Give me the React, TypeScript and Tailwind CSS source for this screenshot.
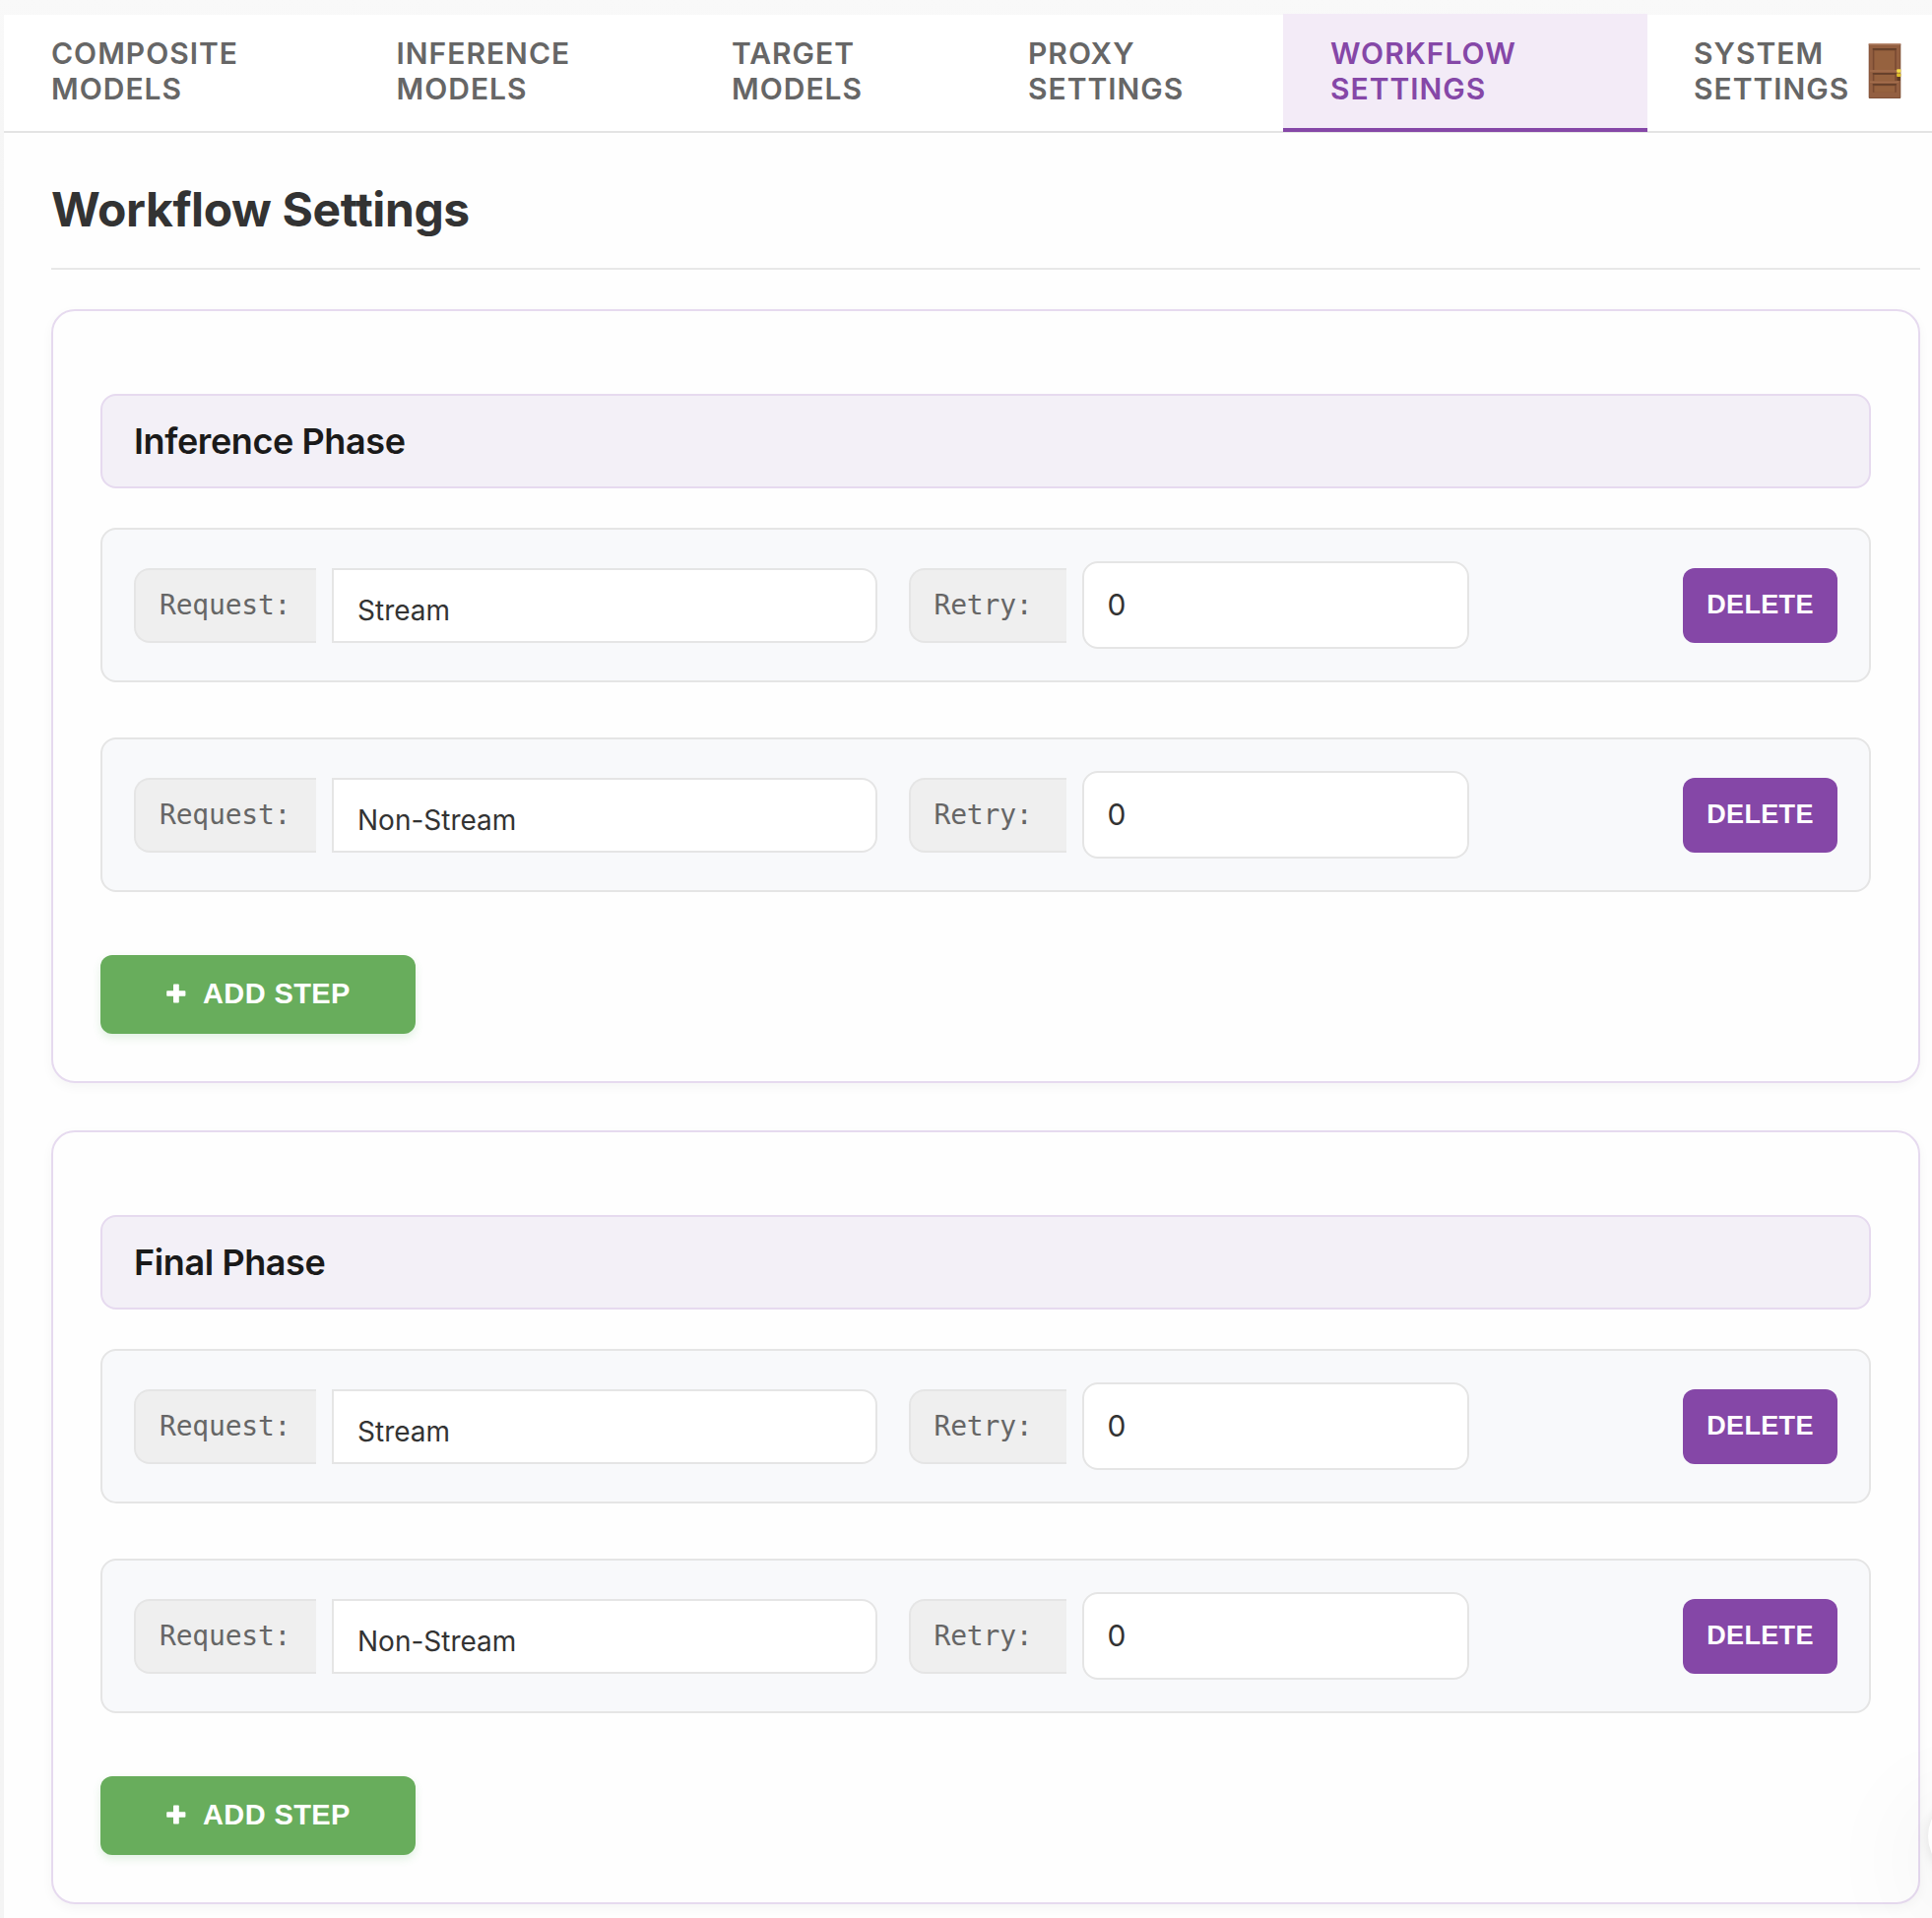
const tabs = [
  { lines: ['COMPOSITE', 'MODELS'], width: 'w-[350.5px]' },
  { lines: ['INFERENCE', 'MODELS'], width: 'w-[340.5px]' },
  { lines: ['TARGET', 'MODELS'], width: 'w-[301px]' },
  { lines: ['PROXY', 'SETTINGS'], width: 'w-[307px]' },
  { lines: ['WORKFLOW', 'SETTINGS'], width: 'w-[370px]', active: true },
  { lines: ['SYSTEM', 'SETTINGS'], width: 'w-[225px] -ml-px' },
];

const phases = [
  { title: 'Inference Phase', steps: ['Stream', 'Non-Stream'] },
  { title: 'Final Phase', steps: ['Stream', 'Non-Stream'] },
];

function DoorIcon() {
  return (
    <svg width="34" height="58" viewBox="0 0 34 58" aria-label="Exit">
      <rect x="0.7" y="1.2" width="32.6" height="55.8" rx="1" fill="#7d5038" />
      <rect x="1.4" y="2" width="31" height="54" fill="#935f41" />
      <rect x="0.7" y="1" width="32.6" height="1.4" fill="#bb8e75" />
      <rect x="4.8" y="6" width="24" height="22" fill="#7a4b32" />
      <rect x="6.4" y="8.4" width="20.8" height="19.6" fill="#96623f" />
      <rect x="4.8" y="6" width="24" height="1.8" fill="#64402b" />
      <rect x="2" y="28.4" width="29" height="1.2" fill="#a87352" />
      <rect x="4.8" y="31" width="24" height="8.4" fill="#7a4b32" />
      <rect x="6.4" y="33" width="20.8" height="6.4" fill="#96623f" />
      <rect x="4.8" y="31" width="24" height="1.6" fill="#64402b" />
      <rect x="2" y="39.6" width="29" height="1.2" fill="#a87352" />
      <rect x="4.8" y="42" width="24" height="8.8" fill="#7a4b32" />
      <rect x="6.4" y="44.2" width="20.8" height="6.6" fill="#96623f" />
      <rect x="4.8" y="42" width="24" height="1.6" fill="#64402b" />
      <rect x="29.4" y="34" width="3.4" height="5" fill="#5f3a24" />
      <rect x="29.2" y="27.2" width="4.2" height="3.6" rx="0.8" fill="#f6e04a" />
      <rect x="29.2" y="31.4" width="4.2" height="3.6" rx="0.8" fill="#dfc02c" />
    </svg>
  );
}

function PlusIcon() {
  return (
    <svg width="20" height="20" viewBox="0 0 20 20" fill="#ffffff" className="-translate-y-px">
      <rect x="0.2" y="7.2" width="19.2" height="5.6" rx="0.8" />
      <rect x="7" y="0.6" width="5.8" height="19" rx="0.8" />
    </svg>
  );
}

function StepRow({ value }: { value: string }) {
  return (
    <div className="flex h-[157px] items-center rounded-2xl border-2 border-[#e5e5e5] bg-[#f8f9fb] px-8">
      <div className="flex h-[76px] w-[185px] items-center rounded-l-2xl border-2 border-r-0 border-[#e5e5e5] bg-[#efefef] pl-6 font-['DejaVu_Sans_Mono',monospace] text-[28px] leading-[36px] tracking-[-0.2px] text-[#666]">
        <span>Request:</span>
      </div>
      <div className="ml-4 flex h-[76px] w-[554px] items-center rounded-r-2xl border-2 border-[#e5e5e5] bg-white px-6 pt-[11px] text-[28px] leading-[36px] text-[#333]">
        {value}
      </div>
      <div className="ml-8 flex h-[76px] w-[160px] items-center rounded-l-2xl border-2 border-r-0 border-[#e5e5e5] bg-[#efefef] pl-[23.5px] font-['DejaVu_Sans_Mono',monospace] text-[28px] leading-[36px] tracking-[-0.2px] text-[#666]">
        <span>Retry:</span>
      </div>
      <div className="ml-4 flex h-[89px] w-[393px] items-center rounded-2xl border-2 border-[#e5e5e5] bg-white px-[23.5px] pb-0.5 text-[30px] leading-[36px] text-[#333]">
        0
      </div>
      <button className="ml-auto flex h-[76px] w-[157px] items-center justify-center rounded-xl bg-[#8547a7] pb-0.5 font-['Liberation_Sans',Arial,sans-serif] text-[27px] font-bold leading-[30px] tracking-[0.35px] text-white">
        DELETE
      </button>
    </div>
  );
}

function PhaseCard({ title, steps }: { title: string; steps: string[] }) {
  return (
    <section className="flex h-[786px] flex-col items-stretch rounded-3xl border-2 border-[#e6daef] bg-[#fefefe] px-12 pt-[84px] shadow-[0_4px_12px_rgba(0,0,0,0.04)]">
      <h2 className="flex h-24 items-center rounded-2xl border-2 border-[#e6daef] bg-[#f3f0f7] px-8 text-[36px] font-semibold leading-[44px] tracking-[-0.4px] text-[#1a1a1a]">
        {title}
      </h2>
      <div className="mt-10 flex flex-col gap-14">
        {steps.map((s) => (
          <StepRow key={s} value={s} />
        ))}
      </div>
      <button className="mt-16 flex h-20 w-80 items-center rounded-xl bg-[#68ad5c] pl-[67px] font-['Liberation_Sans',Arial,sans-serif] text-[29px] font-bold leading-[32px] tracking-[0.4px] text-white shadow-[0_4px_8px_rgba(76,175,80,0.16)]">
        <PlusIcon />
        <span className="ml-[17px] -translate-y-px">ADD STEP</span>
      </button>
    </section>
  );
}

export default function App() {
  return (
    <div className="relative h-[1948px] w-[1962px] overflow-hidden bg-linear-to-b from-[#f9f9f9] to-[#f4f4f4] to-[220px] pl-1 pt-[15px] font-['Inter',sans-serif]">
      <div className="h-[1933px] bg-[#fefefe]">
        <nav className="flex h-[120px] border-b-2 border-[#e4e4e4] bg-white">
          {tabs.map((t) => (
            <div
              key={t.lines.join(' ')}
              className={
                'flex shrink-0 flex-col pl-12 text-[30px] font-semibold leading-[36px] tracking-[1px] ' +
                t.width +
                (t.active
                  ? ' -mt-px h-[120px] border-b-4 border-[#8547a7] bg-[#f3ebf7] pt-[22px] text-[#8547a7]'
                  : ' pt-[21px] text-[#666]')
              }
            >
              {t.lines.map((l) => (
                <span key={l}>{l}</span>
              ))}
            </div>
          ))}
          <div className="mt-7 shrink-0">
            <DoorIcon />
          </div>
        </nav>
        <main className="pl-12 pr-3">
          <h1 className="h-[139px] border-b-2 border-[#e8e8e8] pt-[49px] text-[48px] font-bold leading-[58px] tracking-[-0.4px] text-[#333]">
            Workflow Settings
          </h1>
          <div className="mt-10 flex flex-col gap-12">
            {phases.map((p) => (
              <PhaseCard key={p.title} {...p} />
            ))}
          </div>
        </main>
      </div>
      <div className="absolute -right-[80px] top-[1823px] size-[84px] rounded-full bg-white shadow-[0_2px_12px_rgba(0,0,0,0.1),0_24px_120px_rgba(0,0,0,0.11)]" />
    </div>
  );
}
